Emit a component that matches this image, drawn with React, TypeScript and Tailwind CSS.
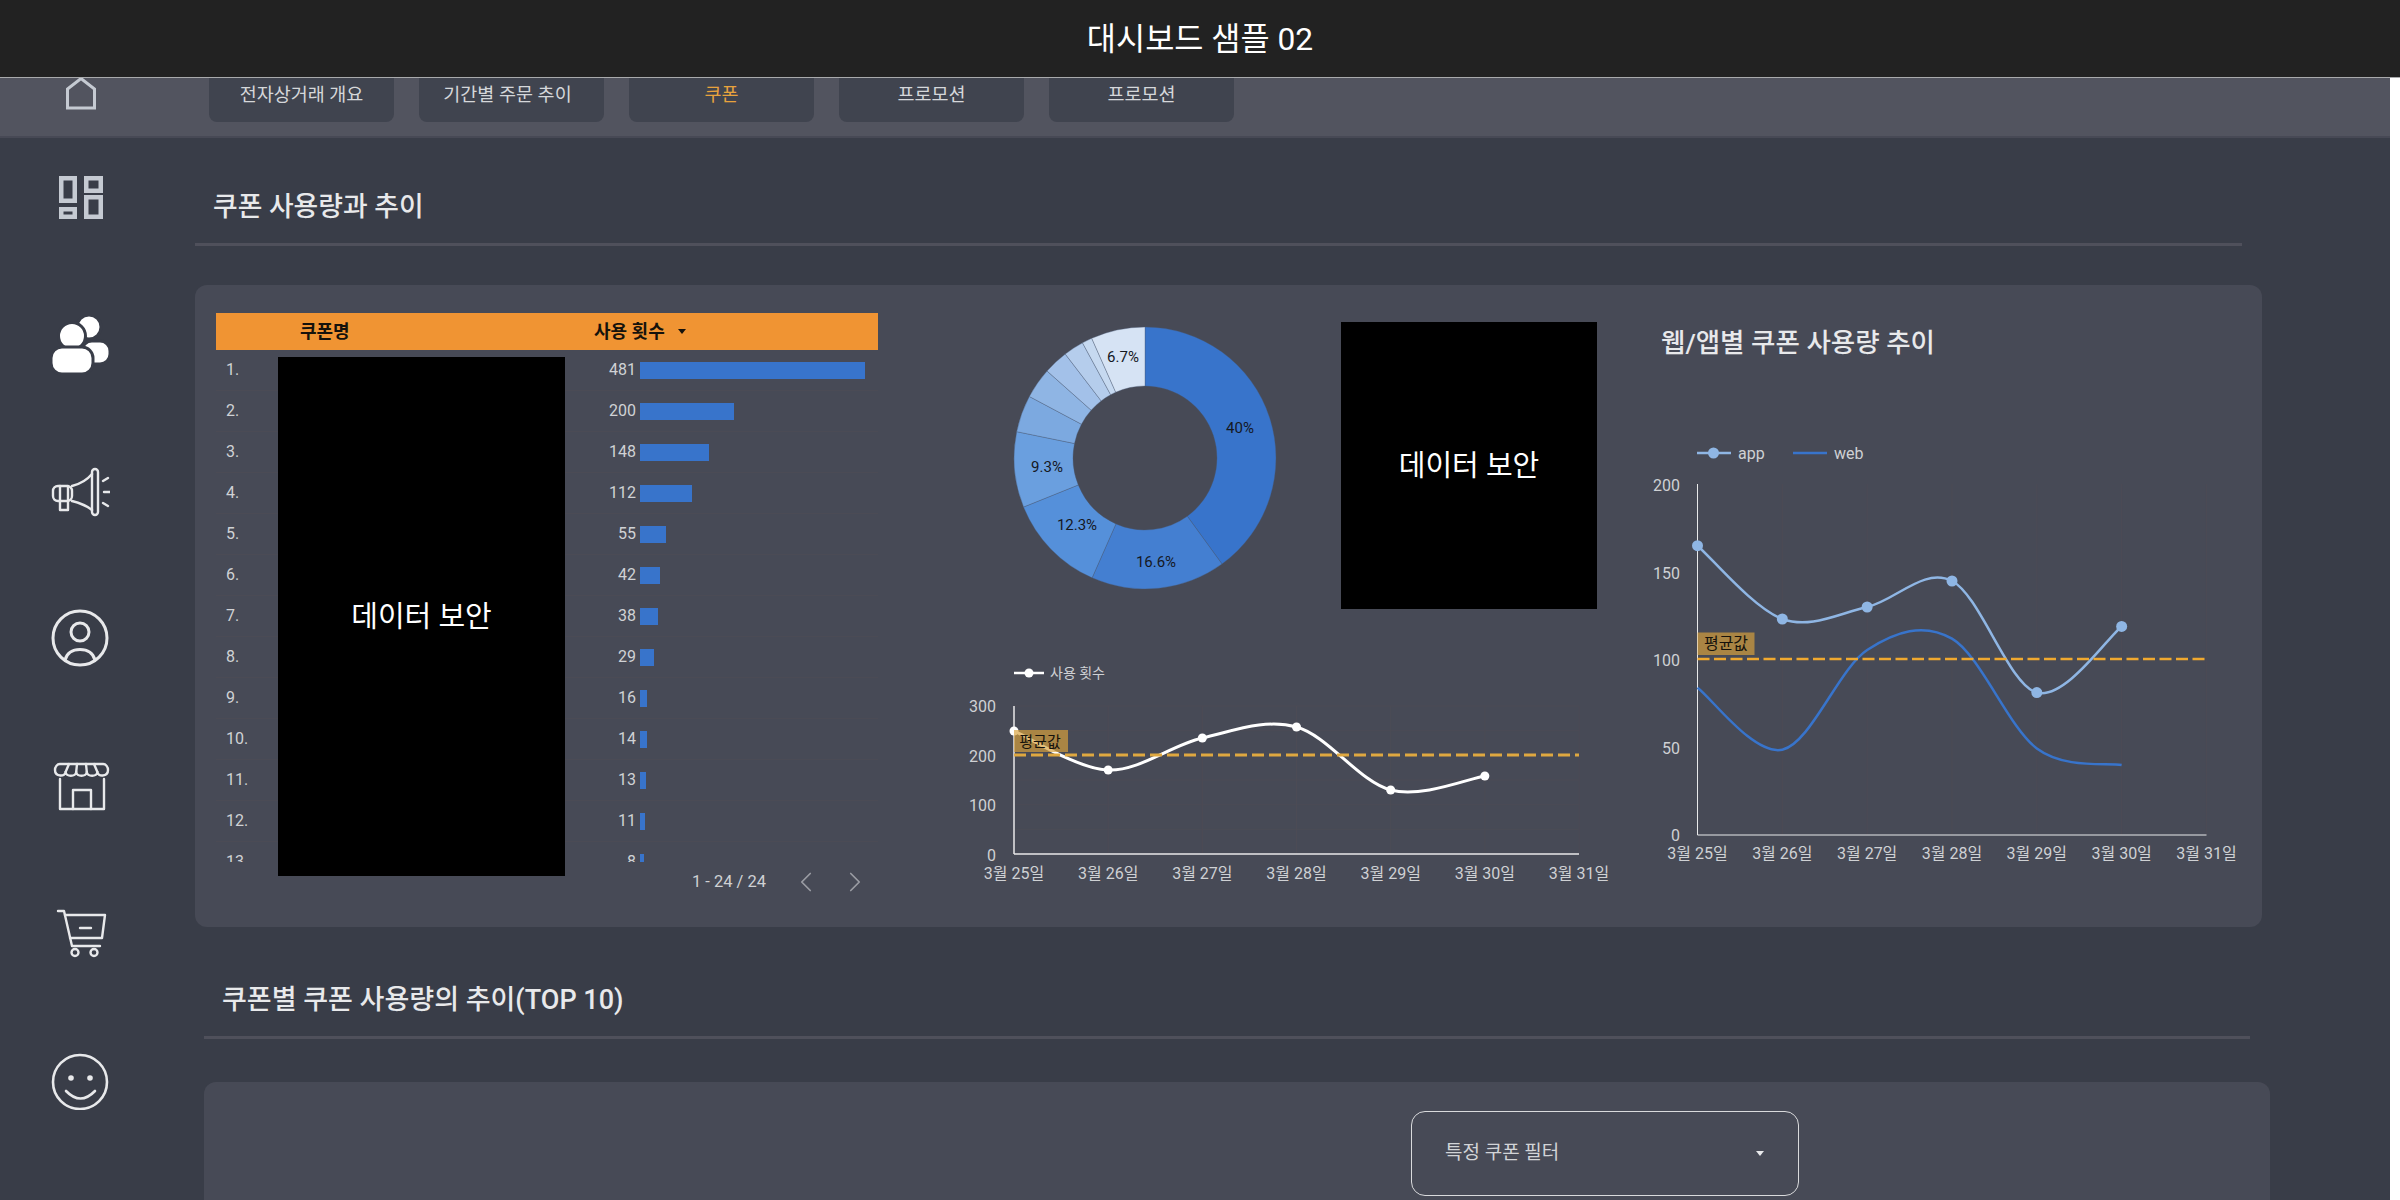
import { ChevronLeft, ChevronRight } from 'lucide-react'

type Pt = [number, number]

const tabs = ['전자상거래 개요', '기간별 주문 추이', '쿠폰', '프로모션', '프로모션']
const rows = [481, 200, 148, 112, 55, 42, 38, 29, 16, 14, 13, 11, 8]
const days = ['3월 25일', '3월 26일', '3월 27일', '3월 28일', '3월 29일', '3월 30일', '3월 31일']

const slices = [
  { end: 144, color: '#3874cb' },
  { end: 203.8, color: '#447fd1' },
  { end: 248, color: '#5590da' },
  { end: 281.6, color: '#6a9fdf' },
  { end: 298, color: '#7ca9e0' },
  { end: 311.6, color: '#8fb5e4' },
  { end: 322.5, color: '#a3c1e9' },
  { end: 331.5, color: '#b5cdec' },
  { end: 336, color: '#c6d9f0' },
  { end: 360, color: '#d6e3f4' },
]

const sliceLabels = [
  { text: '40%', x: 240, y: 108 },
  { text: '16.6%', x: 156, y: 242 },
  { text: '12.3%', x: 77, y: 205 },
  { text: '9.3%', x: 47, y: 147 },
  { text: '6.7%', x: 123, y: 37 },
]

// catmull-rom through the points, close to what the chart lib draws
function smooth(pts: Pt[]) {
  let d = `M${pts[0][0]} ${pts[0][1]}`
  for (let i = 0; i < pts.length - 1; i++) {
    const p0 = pts[Math.max(i - 1, 0)]
    const p1 = pts[i]
    const p2 = pts[i + 1]
    const p3 = pts[Math.min(i + 2, pts.length - 1)]
    const c1x = p1[0] + (p2[0] - p0[0]) / 6
    const c1y = p1[1] + (p2[1] - p0[1]) / 6
    const c2x = p2[0] - (p3[0] - p1[0]) / 6
    const c2y = p2[1] - (p3[1] - p1[1]) / 6
    d += ` C${c1x} ${c1y} ${c2x} ${c2y} ${p2[0]} ${p2[1]}`
  }
  return d
}

function polar(r: number, deg: number): Pt {
  const a = (deg * Math.PI) / 180
  return [145 + r * Math.sin(a), 138 - r * Math.cos(a)]
}

function slicePath(from: number, to: number) {
  const large = to - from > 180 ? 1 : 0
  const [x1, y1] = polar(131, from)
  const [x2, y2] = polar(131, to)
  const [x3, y3] = polar(72, to)
  const [x4, y4] = polar(72, from)
  return `M${x1} ${y1} A131 131 0 ${large} 1 ${x2} ${y2} L${x3} ${y3} A72 72 0 ${large} 0 ${x4} ${y4} Z`
}

function Donut() {
  return (
    <svg width={300} height={300} viewBox="0 0 300 300" className="mt-[7px] ml-[40px] shrink-0">
      {slices.map((s, i) => (
        <path
          key={s.end}
          d={slicePath(i === 0 ? 0 : slices[i - 1].end, s.end)}
          fill={s.color}
          stroke="#4a5a75"
          strokeOpacity={0.6}
          strokeWidth={0.6}
        />
      ))}
      {sliceLabels.map((l) => (
        <text key={l.text} x={l.x} y={l.y} fontSize={15} fill="#15181f" textAnchor="middle" dominantBaseline="central">
          {l.text}
        </text>
      ))}
    </svg>
  )
}

function Secured() {
  return <span className="pt-[3px] text-[29px] text-white">데이터 보안</span>
}

function UsageChart() {
  const xs = days.map((_, i) => 1014 + i * 94.17)
  const data: Pt[] = [731, 770, 738, 727, 790, 776].map((y, i) => [xs[i], y])
  return (
    <svg width={660} height={270} viewBox="960 640 660 270" className="block">
      {[706, 730.7, 755.3, 780, 804.7, 829.3].map((y) => (
        <line key={y} x1={1014} x2={1579} y1={y} y2={y} stroke="#4c4b55" />
      ))}
      {xs.slice(1).map((x) => (
        <line key={x} x1={x} x2={x} y1={706} y2={854} stroke="#4c4b55" />
      ))}
      <line x1={1014} x2={1014} y1={706} y2={854} stroke="#e8e9ea" strokeWidth={1.5} />
      <line x1={1014} x2={1579} y1={854} y2={854} stroke="#e8e9ea" strokeWidth={1.5} />
      {[
        ['300', 706],
        ['200', 756],
        ['100', 805],
        ['0', 855],
      ].map(([t, y]) => (
        <text key={t} x={996} y={y} fontSize={16} fill="#cfd1d4" textAnchor="end" dominantBaseline="central">
          {t}
        </text>
      ))}
      {days.map((d, i) => (
        <text key={d} x={xs[i]} y={873} fontSize={16} fill="#cfd1d4" textAnchor="middle" dominantBaseline="central">
          {d}
        </text>
      ))}
      <line x1={1014} x2={1044} y1={673} y2={673} stroke="#fff" strokeWidth={2.5} />
      <circle cx={1029} cy={673} r={4.5} fill="#fff" />
      <text x={1050} y={673} fontSize={14} fill="#cfd1d4" dominantBaseline="central">
        사용 횟수
      </text>
      <path d={smooth(data)} fill="none" stroke="#fff" strokeWidth={3} />
      {data.map(([x, y]) => (
        <circle key={x} cx={x} cy={y} r={4.5} fill="#fff" />
      ))}
      <line x1={1014} x2={1579} y1={755} y2={755} stroke="#dfa840" strokeWidth={3} strokeDasharray="12 5" />
      <rect x={1014} y={730} width={54} height={22} fill="#d9a23c" fillOpacity={0.68} />
      <text x={1040} y={742} fontSize={15} fill="#15120c" textAnchor="middle" dominantBaseline="central">
        평균값
      </text>
    </svg>
  )
}

function ChannelChart() {
  const xs = days.map((_, i) => 1697.5 + i * 84.83)
  const app: Pt[] = [545.7, 619, 607, 581, 692.6, 626.4].map((y, i) => [xs[i], y])
  const web: Pt[] = [687.7, 749.7, 650, 638.7, 748.5, 765].map((y, i) => [xs[i], y])
  return (
    <svg width={620} height={530} viewBox="1640 367 620 530" className="block">
      {xs.slice(1).map((x) => (
        <line key={x} x1={x} x2={x} y1={484} y2={835} stroke="#4c4b55" />
      ))}
      <line x1={1697.5} x2={1697.5} y1={484} y2={835} stroke="#e8e9ea" />
      <line x1={1697.5} x2={2206.5} y1={835} y2={835} stroke="#e8e9ea" />
      {[
        ['200', 485.5],
        ['150', 573],
        ['100', 660],
        ['50', 748],
        ['0', 835],
      ].map(([t, y]) => (
        <text key={t} x={1680} y={y} fontSize={16} fill="#cfd1d4" textAnchor="end" dominantBaseline="central">
          {t}
        </text>
      ))}
      {days.map((d, i) => (
        <text key={d} x={xs[i]} y={853} fontSize={16} fill="#cfd1d4" textAnchor="middle" dominantBaseline="central">
          {d}
        </text>
      ))}
      <line x1={1697} x2={1731} y1={453} y2={453} stroke="#8fb6e4" strokeWidth={2.5} />
      <circle cx={1713.5} cy={453} r={5.5} fill="#8fb6e4" />
      <text x={1738} y={453} fontSize={16} fill="#cfd1d4" dominantBaseline="central">
        app
      </text>
      <line x1={1793} x2={1827} y1={453} y2={453} stroke="#3874cb" strokeWidth={2.5} />
      <text x={1834} y={453} fontSize={16} fill="#cfd1d4" dominantBaseline="central">
        web
      </text>
      <path d={smooth(web)} fill="none" stroke="#3874cb" strokeWidth={2.5} />
      <path d={smooth(app)} fill="none" stroke="#8fb6e4" strokeWidth={2.5} />
      {app.map(([x, y]) => (
        <circle key={x} cx={x} cy={y} r={5.5} fill="#8fb6e4" />
      ))}
      <line x1={1697.5} x2={2206.5} y1={659} y2={659} stroke="#f0a92f" strokeWidth={2.5} strokeDasharray="12 4.5" />
      <rect x={1697.5} y={632.5} width={57} height={22.5} fill="#d9a23c" fillOpacity={0.68} />
      <text x={1726} y={643.5} fontSize={16} fill="#15120c" textAnchor="middle" dominantBaseline="central">
        평균값
      </text>
    </svg>
  )
}

function CouponTable() {
  return (
    <div className="relative w-[662px] shrink-0">
      <div className="flex h-[37px] items-center bg-[#f09433] pl-[84px] text-[18px] font-bold text-[#15120c]">
        <span className="w-[294px]">쿠폰명</span>
        <span>사용 횟수</span>
        <svg width={8} height={5} viewBox="0 0 8 5" className="ml-[13px]">
          <polygon points="0,0 8,0 4,5" fill="#15120c" />
        </svg>
      </div>
      <div className="h-[512px] overflow-hidden">
        {rows.map((v, i) => (
          <div key={i} className="flex h-[41px] shrink-0 items-center border-b border-[#4b4b55] text-[16px] text-[#d0d2d5]">
            <span className="w-[120px] pl-[10px]">{i + 1}.</span>
            <span className="w-[300px] text-right">{v}</span>
            <span className="ml-[4px] h-[17px] bg-[#3874cb]" style={{ width: v * 0.468 }} />
          </div>
        ))}
      </div>
      <div className="flex h-[40px] items-center justify-end pr-[6px] text-[16.5px] text-[#cfd1d4]">
        <span>1 - 24 / 24</span>
        <ChevronLeft size={34} strokeWidth={1.2} className="ml-[23px] text-[#9a9ca3]" />
        <ChevronRight size={34} strokeWidth={1.2} className="ml-[15px] text-[#9a9ca3]" />
      </div>
      <div className="absolute top-[44px] left-[62px] flex h-[519px] w-[287px] items-center justify-center bg-black">
        <Secured />
      </div>
    </div>
  )
}

function HomeIcon() {
  return (
    <svg width={32} height={32} viewBox="0 0 32 32" fill="none" stroke="#c5cad2" strokeWidth={3}>
      <polygon points="2.5,30 2.5,11 16,0.5 29.5,11 29.5,30" />
    </svg>
  )
}

function SideIcon({ children }: { children: React.ReactNode }) {
  return (
    <svg width={60} height={60} viewBox="0 0 60 60" fill="none" stroke="#e8e9eb" strokeWidth={2.4} strokeLinecap="round" strokeLinejoin="round">
      {children}
    </svg>
  )
}

function Sidebar() {
  return (
    <div className="flex w-[160px] flex-col items-center gap-[87px] pt-[30px]">
      <SideIcon>
        <g stroke="#c5cad2" strokeWidth={4.5} strokeLinejoin="miter">
          <rect x={11.25} y={10.25} width={13.5} height={22.5} />
          <rect x={36.25} y={10.25} width={14.5} height={12.5} />
          <rect x={11.25} y={41.25} width={13.5} height={7.5} />
          <rect x={36.25} y={29.25} width={14.5} height={19.5} />
        </g>
      </SideIcon>
      <SideIcon>
        <g fill="#fff" stroke="#393d48" strokeWidth={3}>
          <circle cx={39} cy={12} r={12} />
          <rect x={32} y={26} width={28} height={23} rx={10} />
          <circle cx={22} cy={21} r={13.5} />
          <rect x={1} y={32} width={42} height={27} rx={11} />
        </g>
      </SideIcon>
      <SideIcon>
        <rect x={3} y={24} width={19} height={15} rx={5} />
        <path d="M10 24V39M18 24V48H10V39" />
        <path d="M22 24C30 22 37 18 42 12M22 39C30 41 37 44 42 48" />
        <rect x={42} y={7} width={6} height={46} rx={3} />
        <path d="M53 19L58 16M54 30H60M53 41L58 44" />
      </SideIcon>
      <SideIcon>
        <circle cx={30} cy={29} r={27} strokeWidth={3} />
        <circle cx={30} cy={23} r={9} strokeWidth={3} />
        <path d="M15 51C17 44 22 40.5 30 40.5C38 40.5 43 44 45 51" strokeWidth={3} />
      </SideIcon>
      <SideIcon>
        <path d="M10 8H53C56 8 58 11 58 14C58 21 47.4 21 47.4 16C47.4 21 36.8 21 36.8 16C36.8 21 26.2 21 26.2 16C26.2 21 15.6 21 15.6 16C15.6 21 5 21 5 14C5 11 7 8 10 8Z" />
        <path d="M15.6 16L19 8M26.2 16L27 8M36.8 16L36 8M47.4 16L44 8" />
        <path d="M10 23V53H54V23" />
        <path d="M23 53V34H41V53" />
      </SideIcon>
      <SideIcon>
        <path d="M8 8H14L22 43H50" />
        <path d="M15 12H55L52 35H20" />
        <path d="M30 25H41" />
        <circle cx={25} cy={49.5} r={3.5} />
        <circle cx={44} cy={49.5} r={3.5} />
      </SideIcon>
      <SideIcon>
        <circle cx={30} cy={32} r={27} strokeWidth={2.6} />
        <circle cx={21} cy={28} r={2.8} fill="#e8e9eb" stroke="none" />
        <circle cx={40} cy={28} r={2.8} fill="#e8e9eb" stroke="none" />
        <path d="M16 41Q30.5 56 45 41" strokeWidth={2.6} />
      </SideIcon>
    </div>
  )
}

export default function App() {
  return (
    <div className="h-[1200px] w-[2400px] overflow-hidden bg-white font-['Roboto','Noto_Sans_CJK_KR',sans-serif]">
      <header className="flex h-[78px] items-center justify-center border-b border-[#a9aaac] bg-[#222222] pt-[2px] text-[31.7px] text-white">
        대시보드 샘플 02
      </header>

      <div className="w-[2390px] bg-[#393d48]">
        <div className="flex h-[60px] border-b-2 border-[#474955] bg-[#52545f]">
          <div className="flex w-[195px] justify-center pr-[33px]">
            <HomeIcon />
          </div>
          <div className="flex gap-[25px] pl-[14px]">
            {tabs.map((t, i) => (
              <div
                key={i}
                className={`flex h-[44px] w-[185px] items-center justify-center rounded-b-[8px] bg-[#40444f] pb-[8px] text-[18.5px] ${
                  i === 2 ? 'text-[#e8a33d]' : 'text-[#d5d7da]'
                } ${i === 1 ? 'pr-[8px]' : ''}`}
              >
                {t}
              </div>
            ))}
          </div>
        </div>

        <div className="flex h-[1062px]">
          <div className="w-[195px] shrink-0">
            <Sidebar />
          </div>

          <main className="w-[2075px] shrink-0">
            <h2 className="mt-[48.5px] pl-[18px] text-[26.8px] leading-[40px] font-medium text-[#e8e9eb]">쿠폰 사용량과 추이</h2>
            <div className="mt-[16.5px] h-[3px] w-[2047px] bg-[#4f505b]" />

            <section className="mt-[39px] flex h-[642px] w-[2067px] rounded-[12px] bg-[#474a56] pt-[28px] pl-[21px]">
              <CouponTable />
              <div className="ml-[82px] w-[660px] shrink-0">
                <div className="flex h-[327px] items-start">
                  <Donut />
                  <div className="mt-[9px] ml-[41px] flex h-[287px] w-[256px] items-center justify-center bg-black">
                    <Secured />
                  </div>
                </div>
                <UsageChart />
              </div>
              <div className="ml-[20px] w-[620px] shrink-0">
                <h3 className="pt-[6px] pl-[21px] text-[26.5px] leading-[48px] font-medium text-[#e8e9eb]">웹/앱별 쿠폰 사용량 추이</h3>
                <ChannelChart />
              </div>
            </section>

            <h2 className="mt-[52.5px] ml-[9px] pl-[18px] text-[27px] leading-[40px] font-medium text-[#e8e9eb]">
              쿠폰별 쿠폰 사용량의 추이(TOP 10)
            </h2>
            <div className="mt-[16.5px] ml-[9px] h-[3px] w-[2046px] bg-[#4f505b]" />

            <section className="mt-[43px] ml-[9px] h-[400px] w-[2066px] rounded-[12px] bg-[#474a56] pt-[29px] pl-[1207px]">
              <div className="flex h-[85px] w-[388px] items-center justify-between rounded-[14px] border-[1.5px] border-[#d9dadc] pr-[34px] pl-[33px] text-[19px] text-[#d2d4d7]">
                <span>특정 쿠폰 필터</span>
                <svg width={8} height={5} viewBox="0 0 8 5">
                  <polygon points="0,0 8,0 4,5" fill="#e8e9eb" />
                </svg>
              </div>
            </section>
          </main>
        </div>
      </div>
    </div>
  )
}
